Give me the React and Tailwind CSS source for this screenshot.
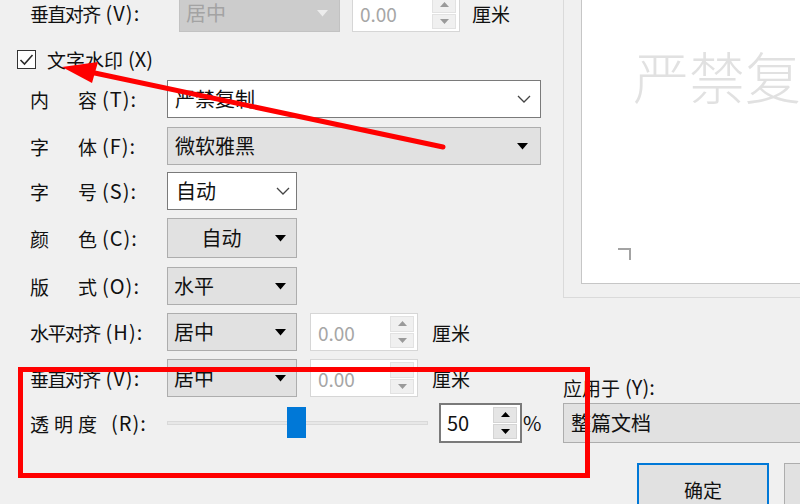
import React from "react";

const Tri = ({ color = "#000" }) => (
  <svg width="11" height="7" viewBox="0 0 11 7">
    <path d="M0 0H11L5.5 6.5Z" fill={color} />
  </svg>
);

const Chevron = () => (
  <svg width="14" height="8" viewBox="0 0 14 8">
    <path d="M1 1L7 7L13 1" fill="none" stroke="#444" strokeWidth="1.3" />
  </svg>
);

const SmallTri = ({ up, color }) => (
  <svg width="9" height="5" viewBox="0 0 9 5">
    <path d={up ? "M0 5H9L4.5 0Z" : "M0 0H9L4.5 5Z"} fill={color} />
  </svg>
);

function Label2({ a, b, tail }) {
  return (
    <div className="flex items-center w-[167px] pl-[30px] shrink-0">
      <span className="w-[48px]">{a}</span>
      <span>{b}</span>
      <span className="ml-[5px] text-[20px] tracking-[1px]">{tail}</span>
    </div>
  );
}

function Label4({ text, tail, className = "w-[167px]" }) {
  return (
    <div className={`flex items-center pl-[30px] shrink-0 ${className}`}>
      <span className="tracking-[-1.6px]">{text}</span>
      <span className="ml-[6px] text-[20px] tracking-[1px]">{tail}</span>
    </div>
  );
}

function Spinner({ className = "" }) {
  return (
    <div className={`h-full flex bg-white border border-[#d6d6d6] ${className}`}>
      <div className="flex-1 flex items-center pl-[7px] text-[#a6a6a6]">0.00</div>
      <div className="w-[24px] flex flex-col gap-[1px] my-[2px] mr-[3px]">
        <div className="flex-1 flex items-center justify-center bg-[#f0f0f0] border border-[#e2e2e2]">
          <SmallTri up color="#9a9a9a" />
        </div>
        <div className="flex-1 flex items-center justify-center bg-[#f0f0f0] border border-[#e2e2e2]">
          <SmallTri color="#9a9a9a" />
        </div>
      </div>
    </div>
  );
}

export default function App() {
  return (
    <div className="relative w-[800px] h-[504px] overflow-hidden bg-[#f0f0f0] text-[19px] text-[#111] font-['Noto_Sans_CJK_SC',sans-serif] leading-none">
      <div className="flex">
        {/* form column */}
        <div className="w-[563px] shrink-0 flex flex-col">
          {/* 垂直对齐 (top, disabled) */}
          <div className="h-[38px] mt-[-6px] flex items-center">
            <Label4 text="垂直对齐" tail="(V):" className="w-[179px]" />
            <div className="w-[161px] h-full flex items-center justify-between bg-[#cccccc] border border-[#c2c2c2] pl-[6px] pr-[11px] text-[#a3a3a3]">
              <span className="text-[20px]">居中</span>
              <Tri color="#ececec" />
            </div>
            <Spinner className="ml-[12px] w-[108px]" />
            <span className="ml-[12px]">厘米</span>
          </div>

          {/* checkbox */}
          <div className="h-[48px] pt-[6px] flex items-center">
            <div className="ml-[17px] w-[19px] h-[19px] bg-white border border-[#333] flex items-center justify-center">
              <svg width="15" height="13" viewBox="0 0 15 13">
                <path d="M1.5 7L5.5 11L13.5 2" fill="none" stroke="#2b2b2b" strokeWidth="1.6" />
              </svg>
            </div>
            <span className="ml-[11px]">文字水印</span>
            <span className="ml-[5px] text-[20px]">(X)</span>
          </div>

          {/* 内容 */}
          <div className="h-[38px] flex items-center">
            <Label2 a="内" b="容" tail="(T):" />
            <div className="w-[374px] h-full flex items-center justify-between bg-white border border-[#7a7a7a] pl-[7px] pr-[9px]">
              <span className="text-[20px]">严禁复制</span>
              <Chevron />
            </div>
          </div>

          {/* 字体 */}
          <div className="h-[38px] mt-[9px] flex items-center">
            <Label2 a="字" b="体" tail="(F):" />
            <div className="w-[374px] h-full flex items-center justify-between bg-[#e1e1e1] border border-[#adadad] pl-[7px] pr-[12px]">
              <span className="text-[20px]">微软雅黑</span>
              <Tri />
            </div>
          </div>

          {/* 字号 */}
          <div className="h-[38px] mt-[7px] flex items-center">
            <Label2 a="字" b="号" tail="(S):" />
            <div className="w-[130px] h-full flex items-center justify-between bg-white border border-[#7a7a7a] pl-[8px] pr-[6px]">
              <span className="text-[20px]">自动</span>
              <Chevron />
            </div>
          </div>

          {/* 颜色 */}
          <div className="h-[40px] mt-[8px] flex items-center">
            <Label2 a="颜" b="色" tail="(C):" />
            <div className="w-[130px] h-full flex items-center bg-[#e1e1e1] border border-[#adadad] pr-[10px]">
              <span className="flex-1 text-center text-[20px]">自动</span>
              <Tri />
            </div>
          </div>

          {/* 版式 */}
          <div className="h-[38px] mt-[9px] flex items-center">
            <Label2 a="版" b="式" tail="(O):" />
            <div className="w-[130px] h-full flex items-center justify-between bg-[#e1e1e1] border border-[#adadad] pl-[6px] pr-[10px]">
              <span className="text-[20px]">水平</span>
              <Tri />
            </div>
          </div>

          {/* 水平对齐 */}
          <div className="h-[38px] mt-[8px] flex items-center">
            <Label4 text="水平对齐" tail="(H):" />
            <div className="w-[130px] h-full flex items-center justify-between bg-[#e1e1e1] border border-[#adadad] pl-[6px] pr-[10px]">
              <span className="text-[20px]">居中</span>
              <Tri />
            </div>
            <Spinner className="ml-[13px] w-[108px]" />
            <span className="ml-[14px]">厘米</span>
          </div>

          {/* 垂直对齐 */}
          <div className="h-[38px] mt-[8px] flex items-center">
            <Label4 text="垂直对齐" tail="(V):" />
            <div className="w-[130px] h-full flex items-center justify-between bg-[#e1e1e1] border border-[#adadad] pl-[6px] pr-[10px]">
              <span className="text-[20px]">居中</span>
              <Tri />
            </div>
            <Spinner className="ml-[13px] w-[108px]" />
            <span className="ml-[14px]">厘米</span>
          </div>

          {/* 透明度 */}
          <div className="h-[40px] mt-[6px] flex items-center">
            <div className="flex items-center w-[167px] pl-[30px] shrink-0">
              <span className="w-[24px]">透</span>
              <span className="w-[24px]">明</span>
              <span>度</span>
              <span className="ml-[14px] text-[20px] tracking-[1px]">(R):</span>
            </div>
            <div className="relative w-[261px] h-full flex items-center">
              <div className="w-full h-[4px] bg-[#e7e7e7] border border-[#d9d9d9]" />
              <div className="absolute left-[120px] top-[4px] w-[19px] h-[31px] bg-[#0078d7]" />
            </div>
            <div className="ml-[11px] w-[83px] h-full flex bg-white border-2 border-[#7a7a7a]">
              <div className="flex-1 flex items-center pl-[6px] text-[20px]">50</div>
              <div className="w-[24px] flex flex-col gap-[1px] my-[2px] mr-[3px]">
                <div className="flex-1 flex items-center justify-center bg-[#e5e5e5] border border-[#d4d4d4]">
                  <SmallTri up color="#000" />
                </div>
                <div className="flex-1 flex items-center justify-center bg-[#e5e5e5] border border-[#d4d4d4]">
                  <SmallTri color="#000" />
                </div>
              </div>
            </div>
            <span className="ml-[1px] text-[20px]">%</span>
          </div>
        </div>

        {/* preview column */}
        <div className="w-[320px] shrink-0 flex flex-col">
          <div className="h-[318px] mt-[-20px] border-l border-b border-[#dadada] pl-[17px] pb-[13px]">
            <div className="h-full bg-white border-l border-b border-[#c6c6c6] flex flex-col">
              <div className="ml-[51px] mt-[67px] text-[56px] leading-none text-[#e1e1e1] whitespace-nowrap font-light">
                严禁复制
              </div>
              <div className="ml-[36px] mt-[145px] w-[13px] h-[12px] border-t-2 border-r-2 border-[#a3a3a3]" />
            </div>
          </div>
          <div className="mt-[77px] h-[24px] flex items-center">
            <span>应用于</span>
            <span className="ml-[5px] text-[20px]">(Y):</span>
          </div>
          <div className="mt-[4px] h-[40px] flex items-center bg-[#e1e1e1] border border-[#adadad] pl-[7px]">
            <span className="text-[20px]">整篇文档</span>
          </div>
          <div className="mt-[20px] flex">
            <div className="ml-[74px] w-[133px] h-[52px] flex items-center justify-center bg-[#e1e1e1] border-2 border-[#0078d7]">
              确定
            </div>
            <div className="ml-[15px] w-[100px] h-[52px] bg-[#e1e1e1] border border-[#adadad]" />
          </div>
        </div>
      </div>

      {/* annotations */}
      <div className="absolute left-[18px] top-[367px] w-[572px] h-[111px] border-[5px] border-[#ff0000] pointer-events-none" />
      <svg className="absolute left-0 top-0 pointer-events-none" width="800" height="504">
        <line x1="443" y1="147" x2="90" y2="72" stroke="#ff0000" strokeWidth="5" strokeLinecap="round" />
        <polygon points="62,67 92,83 98,62" fill="#ff0000" />
      </svg>
    </div>
  );
}
